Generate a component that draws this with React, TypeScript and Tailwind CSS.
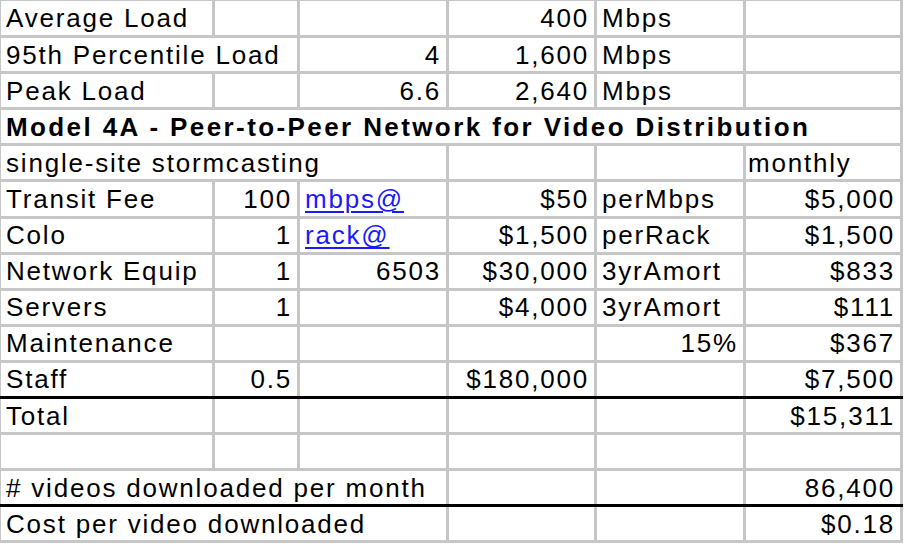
import React from 'react'

type Cell = {
    t?: string
    span?: number
    right?: boolean
    link?: boolean
    bold?: boolean
    pad?: string
}

type Row = {
    cells: Cell[]
    dark?: boolean
}

const rows: Row[] = [
    { cells: [{ t: 'Average Load' }, {}, {}, { t: '400', right: true }, { t: 'Mbps' }, {}] },
    { cells: [{ t: '95th Percentile Load', span: 2 }, { t: '4', right: true }, { t: '1,600', right: true }, { t: 'Mbps' }, {}] },
    { cells: [{ t: 'Peak Load' }, {}, { t: '6.6', right: true }, { t: '2,640', right: true }, { t: 'Mbps' }, {}] },
    { cells: [{ t: 'Model 4A - Peer-to-Peer Network for Video Distribution', span: 6, bold: true }] },
    { cells: [{ t: 'single-site stormcasting', span: 3 }, {}, {}, { t: 'monthly', pad: 'pl-[2px]' }] },
    { cells: [{ t: 'Transit Fee' }, { t: '100', right: true }, { t: 'mbps@', link: true }, { t: '$50', right: true }, { t: 'perMbps' }, { t: '$5,000', right: true }] },
    { cells: [{ t: 'Colo' }, { t: '1', right: true }, { t: 'rack@', link: true }, { t: '$1,500', right: true }, { t: 'perRack' }, { t: '$1,500', right: true }] },
    { cells: [{ t: 'Network Equip' }, { t: '1', right: true }, { t: '6503', right: true }, { t: '$30,000', right: true }, { t: '3yrAmort' }, { t: '$833', right: true }] },
    { cells: [{ t: 'Servers' }, { t: '1', right: true }, {}, { t: '$4,000', right: true }, { t: '3yrAmort' }, { t: '$111', right: true }] },
    { cells: [{ t: 'Maintenance' }, {}, {}, {}, { t: '15%', right: true }, { t: '$367', right: true }] },
    { cells: [{ t: 'Staff' }, { t: '0.5', right: true }, {}, { t: '$180,000', right: true }, {}, { t: '$7,500', right: true }], dark: true },
    { cells: [{ t: 'Total' }, {}, {}, {}, {}, { t: '$15,311', right: true }] },
    { cells: [{}, {}, {}, {}, {}, {}] },
    { cells: [{ t: '# videos downloaded per month', span: 3 }, {}, {}, { t: '86,400', right: true }], dark: true },
    { cells: [{ t: 'Cost per video downloaded', span: 3 }, {}, {}, { t: '$0.18', right: true }] },
]

const widths = [213, 85, 149, 148, 149, 157]

export default function App() {
    return (
        <div className="bg-white w-[904px] h-[548px] overflow-hidden font-['Liberation_Sans',Arial,sans-serif] text-[26px] tracking-[1.8px] text-black">
            <table className='table-fixed border-collapse w-[901px]'>
                <colgroup>
                    {widths.map((w, i) => (
                        <col key={i} style={{ width: w }} />
                    ))}
                </colgroup>
                <tbody>
                    {rows.map((row, ri) => (
                        <tr key={ri} className='h-[36.1px]'>
                            {row.cells.map((c, ci) => (
                                <td
                                    key={ci}
                                    colSpan={c.span}
                                    className={[
                                        'border-r-[3px] border-b-[3px] border-[#c6c6c6] whitespace-nowrap overflow-hidden p-0 leading-none align-middle',
                                        row.dark ? 'border-b-black' : '',
                                        ci === 0 ? 'border-l border-l-[#c6c6c6]' : '',
                                        ri === 0 ? 'border-t border-t-[#c6c6c6]' : '',
                                        c.right ? 'text-right pr-[5px]' : c.pad ?? 'pl-[5px]',
                                        c.bold ? 'font-bold tracking-[2.4px]' : '',
                                    ].join(' ')}
                                >
                                    {c.link ? (
                                        <span className='text-[#1a1aff] underline underline-offset-[3px] decoration-[2px]'>{c.t}</span>
                                    ) : (
                                        c.t
                                    )}
                                </td>
                            ))}
                        </tr>
                    ))}
                </tbody>
            </table>
        </div>
    )
}
